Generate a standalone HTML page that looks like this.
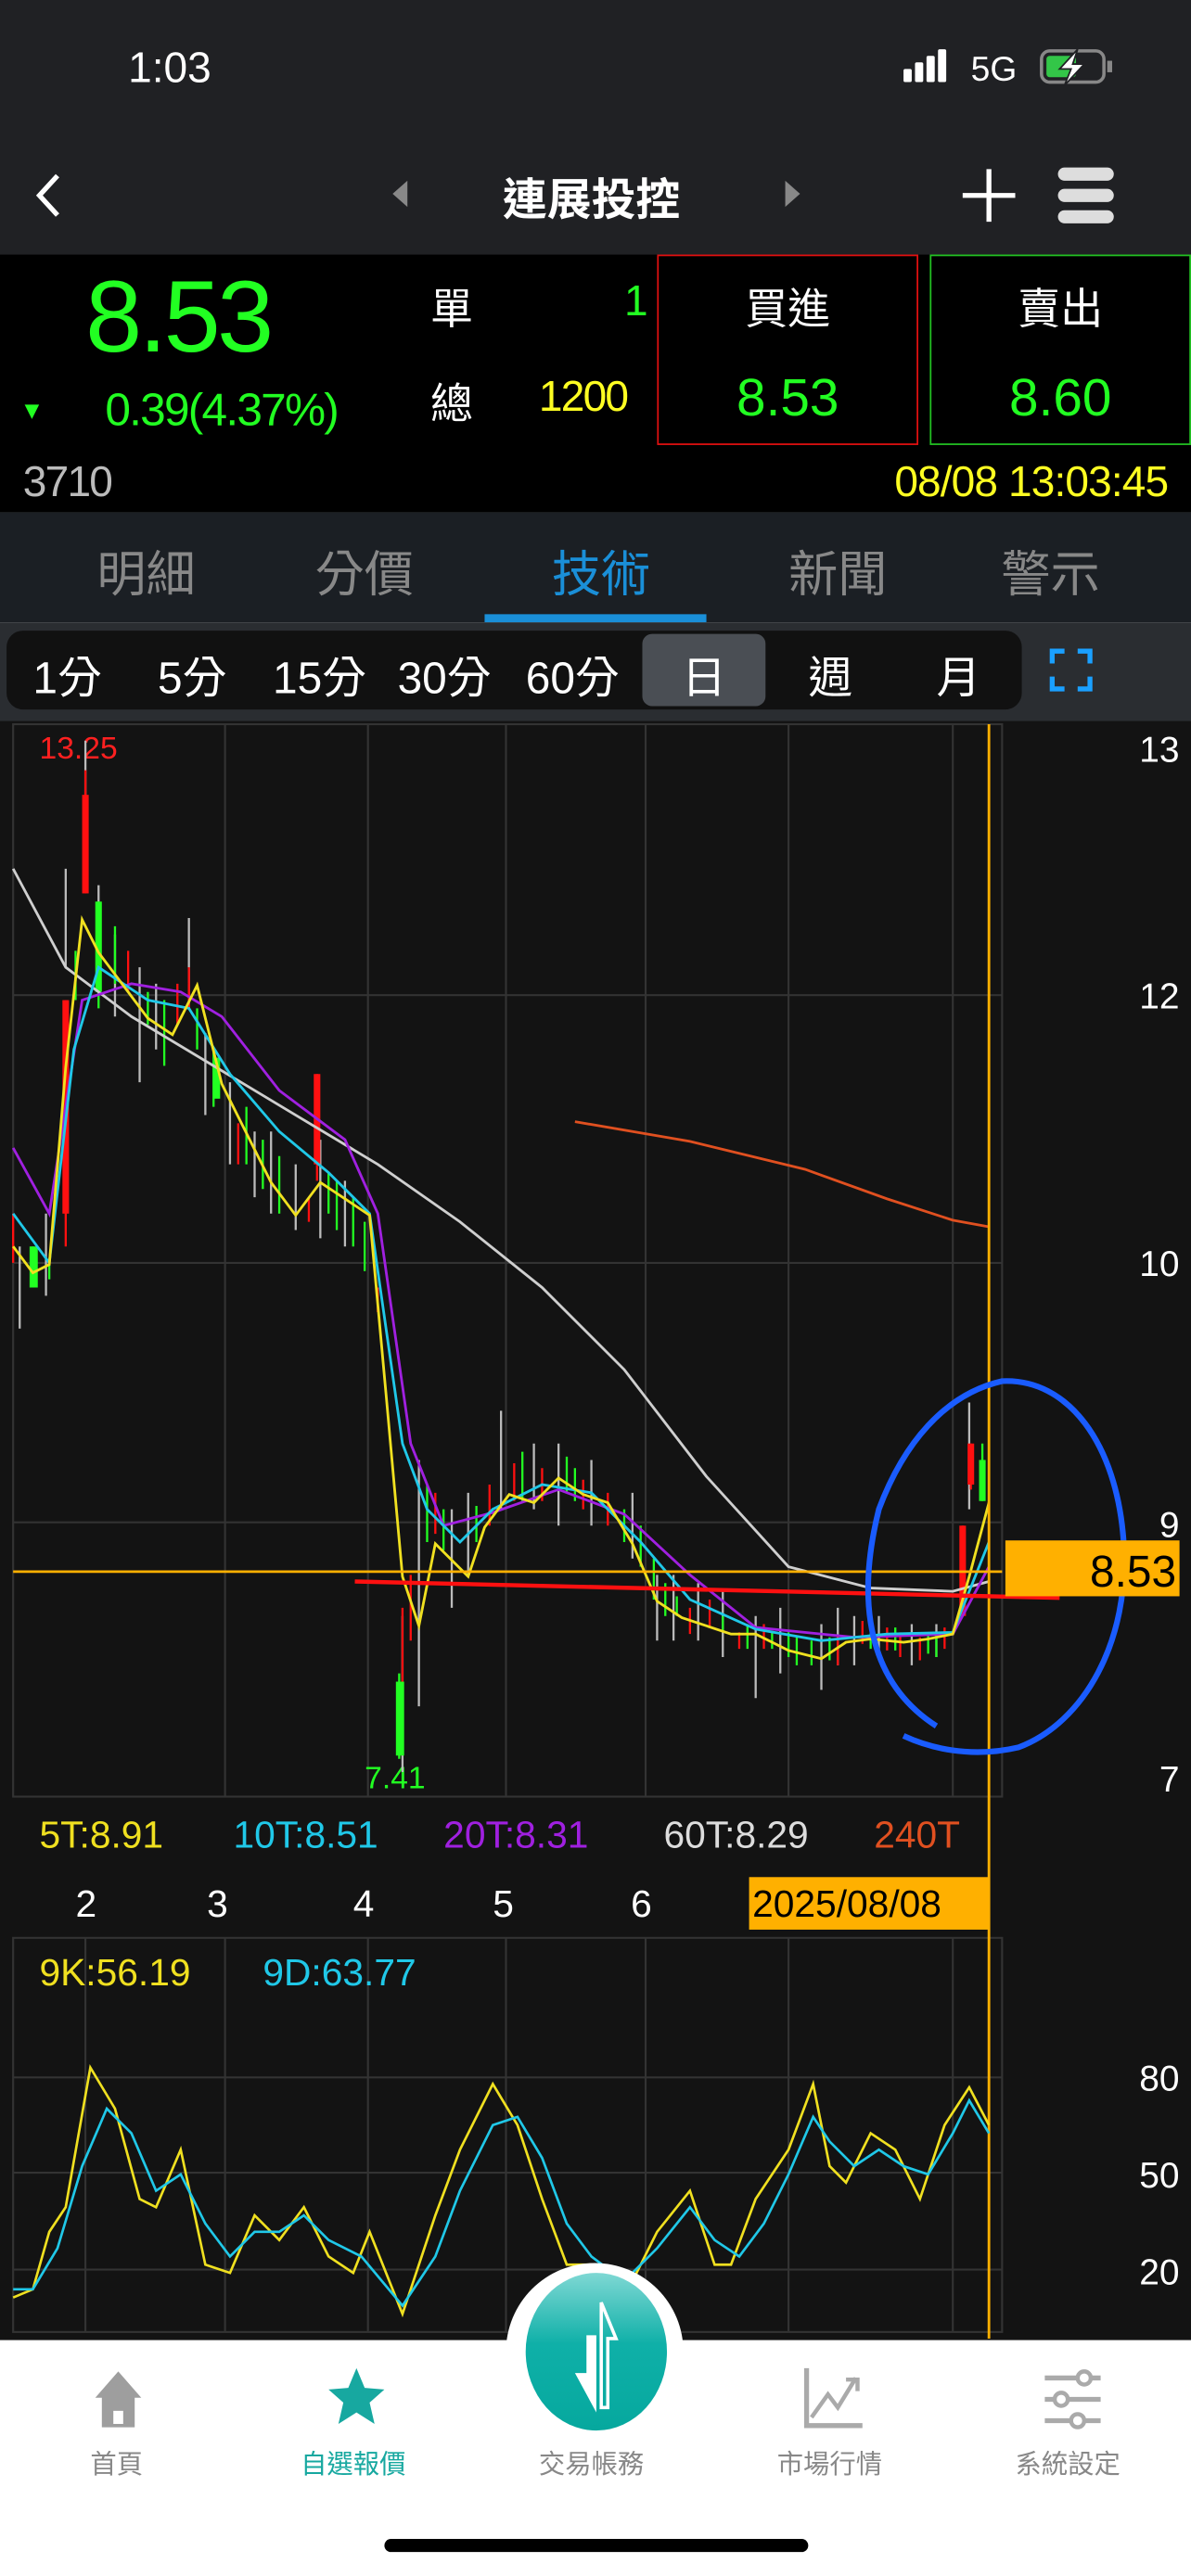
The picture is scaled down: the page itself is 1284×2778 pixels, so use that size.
<!DOCTYPE html>
<html><head><meta charset="utf-8"><style>
*{margin:0;padding:0;box-sizing:border-box}
html,body{width:1284px;height:2778px;overflow:hidden;background:#fff}
#w{position:absolute;left:0;top:0;width:725px;height:1568px;transform:scale(1.77103);transform-origin:0 0;font-family:"Liberation Sans","Noto Sans CJK TC",sans-serif;background:#fff}
.a{position:absolute;white-space:nowrap}
</style></head><body><div id="w">
<div class="a" style="left:0;top:0;width:725px;height:155px;background:#202124"></div>
<div class="a" style="left:78px;top:26px;color:#fff;font-size:26px">1:03</div>
<svg class="a" style="left:548px;top:28px" width="132" height="26">
<rect x="2" y="14" width="5" height="8" rx="1" fill="#fff"/><rect x="9" y="10" width="5" height="12" rx="1" fill="#fff"/><rect x="16" y="6" width="5" height="16" rx="1" fill="#fff"/><rect x="23" y="2" width="5" height="20" rx="1" fill="#fff"/>
<text x="43" y="21" fill="#fff" font-size="21" font-family="Liberation Sans">5G</text>
<rect x="86" y="3" width="38" height="19" rx="5" fill="none" stroke="#888" stroke-width="2"/><rect x="89" y="6" width="18" height="13" rx="2" fill="#33c648"/><rect x="126" y="9" width="3" height="7" fill="#888"/>
<path d="M108 2 L97 14 H104 L100 24 L112 11 H105 Z" fill="#fff" stroke="#202124" stroke-width="1"/></svg>
<svg class="a" style="left:18px;top:104px" width="24" height="30"><path d="M17 3 L6 15 L17 27" fill="none" stroke="#fff" stroke-width="3"/></svg>
<svg class="a" style="left:236px;top:108px" width="14" height="20"><path d="M12 2 L3 10 L12 18Z" fill="#888"/></svg>
<svg class="a" style="left:476px;top:108px" width="14" height="20"><path d="M2 2 L11 10 L2 18Z" fill="#888"/></svg>
<div class="a" style="left:306px;top:100px;color:#fff;font-size:27px;font-weight:bold">連展投控</div>
<svg class="a" style="left:584px;top:100px" width="100" height="38"><path d="M18 3 V35 M2 19 H34" stroke="#fff" stroke-width="3"/><rect x="60" y="2" width="34" height="8" rx="4" fill="#ddd"/><rect x="60" y="15" width="34" height="8" rx="4" fill="#ddd"/><rect x="60" y="28" width="34" height="8" rx="4" fill="#ddd"/></svg>
<div class="a" style="left:0;top:155px;width:725px;height:157px;background:#000"></div>
<div class="a" style="left:52px;top:158px;color:#22ff22;font-size:62px;letter-spacing:-2px">8.53</div>
<div class="a" style="left:12px;top:242px;color:#22ff22;font-size:15px">▼</div>
<div class="a" style="left:64px;top:234px;color:#22ff22;font-size:28px;letter-spacing:-1px">0.39(4.37%)</div>
<div class="a" style="left:262px;top:168px;color:#fff;font-size:26px">單</div>
<div class="a" style="left:380px;top:168px;color:#22ff22;font-size:26px">1</div>
<div class="a" style="left:262px;top:226px;color:#fff;font-size:26px">總</div>
<div class="a" style="left:328px;top:226px;color:#ffff22;font-size:26px;letter-spacing:-1px">1200</div>
<div class="a" style="left:400px;top:155px;width:159px;height:116px;border:1px solid #e01010"></div>
<div class="a" style="left:566px;top:155px;width:159px;height:116px;border:1px solid #22c022"></div>
<div class="a" style="left:400px;top:168px;width:159px;text-align:center;color:#fff;font-size:26px">買進</div>
<div class="a" style="left:400px;top:224px;width:159px;text-align:center;color:#22ff22;font-size:32px">8.53</div>
<div class="a" style="left:566px;top:168px;width:159px;text-align:center;color:#fff;font-size:26px">賣出</div>
<div class="a" style="left:566px;top:224px;width:159px;text-align:center;color:#22ff22;font-size:32px">8.60</div>
<div class="a" style="left:14px;top:278px;color:#bbb;font-size:26px;letter-spacing:-1px">3710</div>
<div class="a" style="right:14px;top:278px;color:#ffff22;font-size:26px;letter-spacing:-0.5px">08/08 13:03:45</div>
<div class="a" style="left:0;top:312px;width:725px;height:67px;background:#1b1f24"></div>
<div class="a" style="left:0;top:325px;width:725px;display:flex;font-size:30px;color:#888"><div style="width:182px;text-align:center">明細</div><div style="width:90px;text-align:center">分價</div><div style="width:205px;text-align:center;color:#1a8fd8">技術</div><div style="width:90px;text-align:center">新聞</div><div style="width:175px;text-align:center">警示</div></div>
<div class="a" style="left:295px;top:374px;width:135px;height:5px;background:#1a8fd8"></div>
<div class="a" style="left:0;top:379px;width:725px;height:60px;background:#2a2d31"></div>
<div class="a" style="left:4px;top:384px;width:618px;height:48px;background:#111;border-radius:10px"></div>
<div class="a" style="left:391px;top:386px;width:75px;height:44px;background:#4a4e54;border-radius:6px"></div>
<div class="a" style="left:0;top:391px;color:#fff;font-size:27px"><span class="a" style="left:20px">1分</span><span class="a" style="left:96px">5分</span><span class="a" style="left:166px">15分</span><span class="a" style="left:242px">30分</span><span class="a" style="left:320px">60分</span><span class="a" style="left:415px">日</span><span class="a" style="left:492px">週</span><span class="a" style="left:570px">月</span></div>
<svg class="a" style="left:638px;top:394px" width="28" height="28"><path d="M1 1h9v3H4v6H1zM27 1h-9v3h6v6h3zM1 27h9v-3H4v-6H1zM27 27h-9v-3h6v-6h3z" fill="#1aa0ff"/></svg>
<div class="a" style="left:0;top:439px;width:725px;height:986px;background:#131313"></div>
<svg class="a" style="left:0;top:439px" width="725" height="986" font-family="Liberation Sans">
<g stroke="#333" stroke-width="1.2" fill="none">
<rect x="8" y="2" width="602" height="653"/>
<path d="M8 167H610M8 330H610M8 488H610M137 2V655M224 2V655M308 2V655M393 2V655M480 2V655M580 2V655"/>
<rect x="8" y="741" width="602" height="240"/>
<path d="M8 826H610M8 884H610M8 943H610M52 741V981M137 741V981M224 741V981M308 741V981M393 741V981M480 741V981M580 741V981"/>
</g>
<g fill="#fff" font-size="22" text-anchor="end"><text x="718" y="25">13</text><text x="718" y="175">12</text><text x="718" y="338">10</text><text x="718" y="497">9</text><text x="718" y="652">7</text><text x="718" y="834">80</text><text x="718" y="893">50</text><text x="718" y="952">20</text></g>
<text x="24" y="23" fill="#ff2020" font-size="19">13.25</text>
<text x="222" y="650" fill="#22ff22" font-size="19">7.41</text>
<g stroke-width="1.3" fill="none">
<g stroke="#bbb"><path d="M52 12V80M40 90V150M60 100V140M85 150V220M115 120V175M140 220V270M165 250V300M195 255V315M245 545V640M255 450V600M275 480V540M305 420V480M340 440V490M400 520V560M425 525V560M460 545V595M500 550V590M520 545V575M555 550V575M590 415V480M12 320V370M28 300V350M70 130V180M95 160V200M125 190V240M155 250V290M180 270V310M210 280V320M285 470V520M325 440V480M360 450V490M385 470V510M410 520V560M440 530V570M475 540V580M510 540V575M535 545V570M570 550V570"/></g>
<path stroke="#ff1010" d="M52 30V105M40 170V320M115 150V175M193 215V280M230 345V360M245 540V600M250 520V560M298 465V490M313 452V475M355 462V480M420 540V556M450 555V565M510 557V575M540 552V566M560 558V572M586 490V545M591 440V468M8 300V330M78 140V165M108 160V185M145 245V270M188 290V305M265 470V495M330 455V475M370 470V490M432 535V552M465 550V565M525 548V562M548 555V570M575 552V565"/>
<g stroke="#22ff22"><path d="M243 580V632M30 330V340M20 320V345M60 110V175M70 125V160M100 170V210M130 200V235M150 235V270M170 265V300M205 280V310M222 305V335M260 465V500M270 480V505M318 445V475M345 448V470M380 480V500M398 510V535M412 533V545M440 545V555M470 555V565M485 558V575M494 560V575M530 552V565M570 557V570M598 440V475M46 140V170M90 165V185M120 175V200M160 255V285M200 275V300M215 290V320M290 478V500M350 455V475M390 490V515M405 525V545M455 550V565M480 555V570M505 558V572M545 552V566M565 555V568"/></g>
</g>
<g fill="#ff1010"><rect x="38" y="170" width="4" height="130"/><rect x="50" y="45" width="4" height="60"/><rect x="191" y="215" width="4" height="55"/><rect x="584" y="490" width="4" height="55"/><rect x="589" y="440" width="4" height="25"/></g>
<g fill="#22ff22"><rect x="241" y="585" width="5" height="45"/><rect x="58" y="110" width="4" height="55"/><rect x="18" y="320" width="5" height="25"/><rect x="596" y="450" width="4" height="25"/><rect x="130" y="205" width="4" height="25"/></g>
<g fill="none" stroke-width="1.6">
<polyline stroke="#e05020" points="350,244 420,256 490,273 540,291 580,304 602,308"/>
<polyline stroke="#cfcfcf" points="8,90 40,150 80,180 130,210 180,240 230,270 280,305 330,345 380,395 430,460 480,515 530,528 580,530 602,524"/>
<polyline stroke="#a020e0" points="8,260 30,300 50,170 80,160 110,165 135,180 170,225 210,255 230,300 250,440 270,490 300,482 340,468 380,483 420,520 460,552 520,558 580,556 602,515"/>
<polyline stroke="#20c8e8" points="8,300 30,330 45,200 60,150 90,170 115,175 140,215 170,250 200,275 225,300 245,440 260,480 280,500 300,480 330,465 360,470 390,500 420,535 460,553 500,560 540,556 580,555 602,500"/>
<polyline stroke="#f0e020" points="8,320 20,336 30,331 40,211 50,121 60,141 75,161 90,181 105,191 120,161 135,221 150,251 165,281 180,301 195,281 210,291 225,301 235,410 245,521 255,551 265,501 275,511 285,521 295,491 310,471 325,476 340,461 355,471 370,476 385,501 400,536 415,546 430,551 445,556 460,556 480,566 500,571 515,561 530,559 550,561 565,559 580,556 590,521 602,476"/>
<path stroke="#ffb000" d="M8 518H610M602 2V985"/>
<path stroke="#ff1010" stroke-width="2.5" d="M216 524L645 534"/>
<path stroke="#1a5cff" stroke-width="3.5" d="M570 612C520 580 525 520 535 480C550 440 575 410 610 402C650 400 680 440 684 500C688 560 660 610 620 625C590 632 565 625 550 618"/>
<polyline stroke="#f0e020" stroke-width="1.5" points="8,960 20,955 30,920 40,905 55,820 70,845 85,900 95,905 110,870 125,940 140,945 155,910 170,925 185,905 200,935 215,945 225,920 245,970 265,910 280,870 300,830 315,855 330,900 345,940 360,940 380,960 400,920 420,895 435,940 445,940 460,900 480,870 495,830 505,880 515,890 530,860 545,870 560,900 575,855 590,832 602,855"/>
<polyline stroke="#20c8e8" stroke-width="1.5" points="8,955 20,955 35,930 50,880 65,845 80,860 95,895 110,885 125,915 140,935 155,920 170,920 185,910 200,925 220,935 245,965 265,935 280,895 300,855 315,850 330,875 345,915 360,935 380,950 400,930 420,905 435,925 450,935 465,915 480,885 495,850 505,865 520,880 535,870 550,880 565,885 580,860 590,840 602,860"/>
</g>
<rect x="612" y="499" width="106" height="34" fill="#ffb000"/>
<text x="716" y="527" fill="#000" font-size="27" text-anchor="end">8.53</text>
<g font-size="23"><text x="24" y="686" fill="#f0e020">5T:8.91</text><text x="142" y="686" fill="#20c8e8">10T:8.51</text><text x="270" y="686" fill="#a020e0">20T:8.31</text><text x="404" y="686" fill="#ddd">60T:8.29</text><text x="532" y="686" fill="#e05020">240T</text></g>
<g font-size="23" fill="#fff"><text x="46" y="728">2</text><text x="126" y="728">3</text><text x="215" y="728">4</text><text x="300" y="728">5</text><text x="384" y="728">6</text></g>
<rect x="456" y="704" width="146" height="32" fill="#ffb000"/><text x="458" y="728" font-size="23" fill="#000">2025/08/08</text>
<g font-size="23"><text x="24" y="770" fill="#f0e020">9K:56.19</text><text x="160" y="770" fill="#20c8e8">9D:63.77</text></g>
</svg>
<div class="a" style="left:0;top:1425px;width:725px;height:143px;background:#fff"></div>
<div class="a" style="left:308px;top:1378px;width:108px;height:108px;border-radius:50%;background:#fff"></div>
<div class="a" style="left:320px;top:1384px;width:86px;height:96px;border-radius:50%;background:linear-gradient(#7fd8d4,#0fb0a8 45%,#06a89e)"></div>
<svg class="a" style="left:320px;top:1384px" width="86" height="96"><path d="M37 38 H43 V85 L30 61 H37 Z" fill="#fff"/><path d="M46 82 V18 L55 40 H50 V82 Z" fill="none" stroke="#fff" stroke-width="2"/></svg>
<svg class="a" style="left:54px;top:1442px" width="36" height="38"><path d="M18 2 L32 18 H28 V36 H8 V18 H4Z M15 26 V34 H21 V26Z" fill="#9e9e9e" fill-rule="evenodd"/></svg>
<svg class="a" style="left:198px;top:1440px" width="38" height="38"><path d="M19 2 L24 14 L36 15 L27 23 L30 36 L19 29 L8 36 L11 23 L2 15 L14 14Z" fill="#17a8a0"/></svg>
<svg class="a" style="left:488px;top:1440px" width="40" height="40"><path d="M3 2 V37 H37" fill="none" stroke="#aaa" stroke-width="3"/><path d="M6 32 L16 18 L22 26 L33 8 M27 9 H34 V16" fill="none" stroke="#aaa" stroke-width="2.5"/></svg>
<svg class="a" style="left:634px;top:1442px" width="38" height="38"><g stroke="#aaa" stroke-width="3" fill="none"><path d="M2 6H36M2 19H36M2 32H36"/></g><circle cx="26" cy="6" r="4" fill="#fff" stroke="#aaa" stroke-width="2.5"/><circle cx="12" cy="19" r="4" fill="#fff" stroke="#aaa" stroke-width="2.5"/><circle cx="22" cy="32" r="4" fill="#fff" stroke="#aaa" stroke-width="2.5"/></svg>
<div class="a" style="left:0;top:1487px;width:725px;font-size:16px;color:#888"><span class="a" style="left:55px">首頁</span><span class="a" style="left:183px;color:#17a8a0">自選報價</span><span class="a" style="left:328px">交易帳務</span><span class="a" style="left:473px">市場行情</span><span class="a" style="left:618px">系統設定</span></div>
<div class="a" style="left:234px;top:1546px;width:258px;height:8px;border-radius:4px;background:#000"></div>
</div></body></html>
